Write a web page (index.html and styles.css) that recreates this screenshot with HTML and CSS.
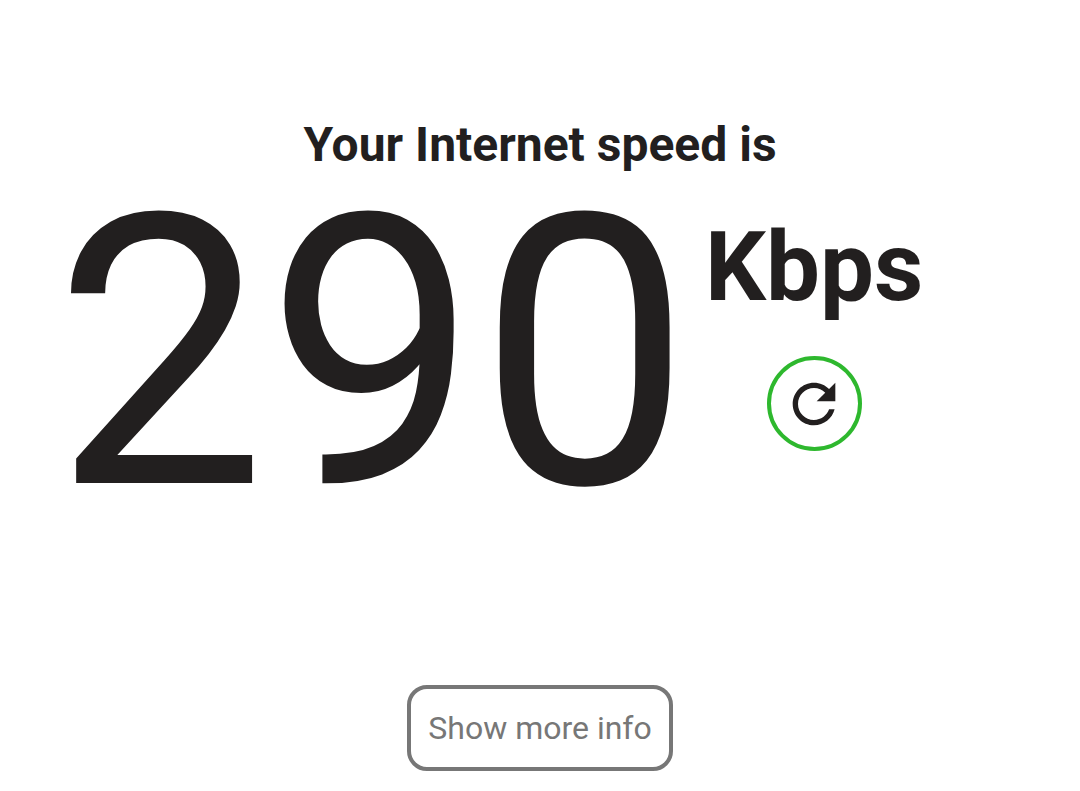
FILE: index.html
```html
<!DOCTYPE html>
<html lang="en">
<head>
  <meta charset="UTF-8" />
  <meta name="viewport" content="width=device-width, initial-scale=1.0" />
  <title>Internet speed test</title>
  <link rel="stylesheet" href="styles.css">
</head>
<body>
  <main class="speed-test">
    <h1 class="title">Your Internet speed is</h1>

    <div class="result">
      <div class="speed-value">290</div>
      <div class="speed-side">
        <div class="speed-units">Kbps</div>
        <button class="refresh" type="button" aria-label="Restart">
          <svg viewBox="0 0 24 24" aria-hidden="true">
            <path d="M17.65 6.35C16.2 4.9 14.21 4 12 4c-4.42 0-7.99 3.58-7.99 8s3.57 8 7.99 8c3.73 0 6.84-2.55 7.73-6h-2.08c-.82 2.33-3.04 4-5.65 4-3.31 0-6-2.69-6-6s2.69-6 6-6c1.66 0 3.14.69 4.22 1.78L13 11h7V4l-2.35 2.35z"/>
          </svg>
        </button>
      </div>
    </div>

    <button class="more-info" type="button">Show more info</button>
  </main>
</body>
</html>
```

FILE: styles.css
```css
body {
  margin: 0;
  background: #fff;
  color: #221f1f;
  font-family: Roboto, 'Liberation Sans', sans-serif;
}

button {
  font-family: inherit;
  background: #fff;
  cursor: pointer;
}

.speed-test {
  display: flex;
  flex-direction: column;
  align-items: center;
  padding: 117px 0 20px;
}

.title {
  margin: 0;
  font-size: 48px;
  line-height: 56px;
  font-weight: bold;
}

.result {
  align-self: stretch;
  display: flex;
  justify-content: center;
  padding-right: 103px;
}

.speed-value {
  font-size: 378px;
  line-height: 362px;
  font-weight: normal;
}

.speed-side {
  display: flex;
  flex-direction: column;
  align-items: center;
  gap: 31px;
  padding-top: 36px;
  margin-left: 14px;
}

.speed-units {
  font-size: 96px;
  line-height: 116px;
  font-weight: bold;
}

.refresh {
  display: flex;
  align-items: center;
  justify-content: center;
  width: 95px;
  height: 95px;
  padding: 0;
  border: 4px solid #2eb82e;
  border-radius: 50%;
}

.refresh svg {
  width: 64px;
  height: 64px;
  fill: #221f1f;
}

.more-info {
  margin-top: 150px;
  padding: 20px 17px;
  border: 4px solid #777;
  border-radius: 20px;
  color: #777;
  font-size: 32px;
  line-height: 38px;
}
```
